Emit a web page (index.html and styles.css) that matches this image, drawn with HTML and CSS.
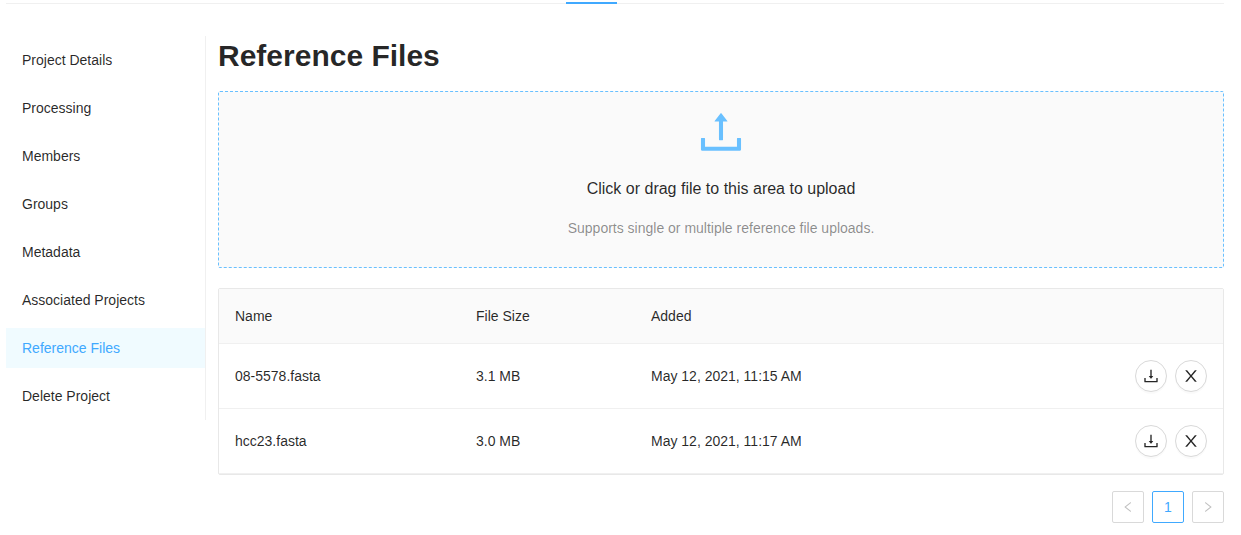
FILE: index.html
```html
<!DOCTYPE html>
<html lang="en">
<head>
<meta charset="utf-8">
<title>Reference Files</title>
<link rel="stylesheet" href="styles.css">
</head>
<body>
<svg class="icon-defs" aria-hidden="true">
  <symbol id="upload" viewBox="64 64 896 896"><path d="M400 317.7h73.9V656c0 4.4 3.6 8 8 8h60c4.4 0 8-3.6 8-8V317.7H624c6.7 0 10.4-7.7 6.3-12.9L518.3 163a8 8 0 00-12.6 0l-112 141.7c-4.1 5.3-.4 13 6.3 13zM878 626h-60c-4.4 0-8 3.6-8 8v154H214V634c0-4.4-3.6-8-8-8h-60c-4.4 0-8 3.6-8 8v198c0 17.7 14.3 32 32 32h684c17.7 0 32-14.3 32-32V634c0-4.4-3.6-8-8-8z"/></symbol>
  <symbol id="download" viewBox="64 64 896 896"><path d="M505.7 661a8 8 0 0012.6 0l112-141.7c4.1-5.2.4-12.9-6.3-12.9h-74.1V168c0-4.4-3.6-8-8-8h-60c-4.4 0-8 3.6-8 8v338.3H400c-6.7 0-10.4 7.7-6.3 12.9l112 141.8zM878 626h-60c-4.4 0-8 3.6-8 8v154H214V634c0-4.4-3.6-8-8-8h-60c-4.4 0-8 3.6-8 8v198c0 17.7 14.3 32 32 32h684c17.7 0 32-14.3 32-32V634c0-4.4-3.6-8-8-8z"/></symbol>
  <symbol id="close" viewBox="64 64 896 896"><path d="M563.8 512l262.5-312.9c4.4-5.2.7-13.1-6.1-13.1h-79.8c-4.7 0-9.2 2.1-12.3 5.7L511.6 449.8 295.1 191.7c-3-3.6-7.5-5.7-12.3-5.7H203c-6.8 0-10.5 7.9-6.1 13.1L459.4 512 196.9 824.9A7.95 7.95 0 00203 838h79.8c4.7 0 9.2-2.1 12.3-5.7l216.5-258.1 216.5 258.1c3 3.6 7.5 5.7 12.3 5.7h79.8c6.8 0 10.5-7.9 6.1-13.1L563.8 512z"/></symbol>
  <symbol id="left" viewBox="64 64 896 896"><path d="M724 218.3V141c0-6.7-7.7-10.4-12.9-6.3L260.3 486.8a31.86 31.86 0 000 50.3l450.8 352.1c5.3 4.1 12.9.4 12.9-6.3v-77.3c0-4.9-2.3-9.6-6.1-12.6l-360-281 360-281.1c3.8-3 6.1-7.7 6.1-12.6z"/></symbol>
  <symbol id="right" viewBox="64 64 896 896"><path d="M765.7 486.8L314.9 134.7A7.97 7.97 0 00302 141v77.3c0 4.9 2.3 9.6 6.1 12.6l360 281.1-360 281.1c-3.9 3-6.1 7.7-6.1 12.6V883c0 6.7 7.7 10.4 12.9 6.3l450.8-352.1a31.96 31.96 0 000-50.4z"/></symbol>
</svg>
<div class="page">
  <div class="tabs"><div class="tab-ink"></div></div>
  <div class="layout">
    <nav class="menu" aria-label="Project settings">
      <a class="menu-item" href="#details">Project Details</a>
      <a class="menu-item" href="#processing">Processing</a>
      <a class="menu-item" href="#members">Members</a>
      <a class="menu-item" href="#groups">Groups</a>
      <a class="menu-item" href="#metadata">Metadata</a>
      <a class="menu-item" href="#associated">Associated Projects</a>
      <a class="menu-item menu-item-selected" href="#references" aria-current="page">Reference Files</a>
      <a class="menu-item" href="#delete">Delete Project</a>
    </nav>
    <main class="content">
      <h1 class="title">Reference Files</h1>
      <button class="dragger" type="button">
        <svg class="dragger-icon" aria-hidden="true"><use href="#upload"/></svg>
        <span class="dragger-text">Click or drag file to this area to upload</span>
        <span class="dragger-hint">Supports single or multiple reference file uploads.</span>
      </button>
      <div class="table-box">
        <table class="table">
          <thead>
            <tr><th class="col-name">Name</th><th class="col-size">File Size</th><th>Added</th><th class="col-actions" aria-label="Actions"></th></tr>
          </thead>
          <tbody>
            <tr>
              <td>08-5578.fasta</td><td>3.1 MB</td><td>May 12, 2021, 11:15 AM</td>
              <td><div class="actions">
                <button class="round" type="button" aria-label="Download 08-5578.fasta"><svg class="icon"><use href="#download"/></svg></button>
                <button class="round" type="button" aria-label="Remove 08-5578.fasta"><svg class="icon"><use href="#close"/></svg></button>
              </div></td>
            </tr>
            <tr>
              <td>hcc23.fasta</td><td>3.0 MB</td><td>May 12, 2021, 11:17 AM</td>
              <td><div class="actions">
                <button class="round" type="button" aria-label="Download hcc23.fasta"><svg class="icon"><use href="#download"/></svg></button>
                <button class="round" type="button" aria-label="Remove hcc23.fasta"><svg class="icon"><use href="#close"/></svg></button>
              </div></td>
            </tr>
          </tbody>
        </table>
      </div>
      <nav class="pagination" aria-label="Pagination">
        <button class="page-button" type="button" disabled aria-label="Previous page"><svg class="icon-small"><use href="#left"/></svg></button>
        <button class="page-button page-button-active" type="button" aria-current="page">1</button>
        <button class="page-button" type="button" disabled aria-label="Next page"><svg class="icon-small"><use href="#right"/></svg></button>
      </nav>
    </main>
  </div>
</div>
</body>
</html>
```
FILE: styles.css
```css
* {
  box-sizing: border-box;
}

body {
  margin: 0;
  background: #fff;
  color: rgba(0, 0, 0, 0.85);
  font: 14px/22px "Liberation Sans", Arial, sans-serif;
}

button {
  font: inherit;
  color: inherit;
  cursor: pointer;
}

svg {
  display: block;
  fill: currentColor;
}

.icon-defs {
  display: none;
}

.page {
  padding: 2px 17px 12px 6px;
}

.tabs {
  height: 2px;
  padding-left: 560px;
  background: linear-gradient(#f0f0f0, #f0f0f0) bottom / 100% 1px no-repeat;
}

.tab-ink {
  width: 51px;
  height: 2px;
  background: #40a9ff;
}

.layout {
  display: flex;
  align-items: flex-start;
  gap: 12px;
  padding-top: 32px;
}

.menu {
  display: flex;
  flex: none;
  flex-direction: column;
  gap: 8px;
  width: 200px;
  padding: 4px 0;
  border-right: 1px solid #f0f0f0;
}

.menu-item {
  padding: 0 16px;
  color: inherit;
  line-height: 40px;
  text-decoration: none;
}

.menu-item-selected {
  background: #f0fbff;
  color: #40a9ff;
}

.content {
  flex: 1;
  min-width: 0;
}

.title {
  margin: 0 0 15px;
  font-size: 30px;
  font-weight: 600;
  line-height: 40px;
}

.dragger {
  display: flex;
  flex-direction: column;
  align-items: center;
  width: 100%;
  margin-bottom: 20px;
  padding: 16px 0 28px;
  border: 1px dashed #69c0ff;
  border-radius: 2px;
  background: #fafafa;
}

.dragger-icon {
  width: 48px;
  height: 48px;
  margin-bottom: 21px;
  color: #69c0ff;
}

.dragger-text {
  margin-bottom: 16px;
  font-size: 16px;
  line-height: 24px;
}

.dragger-hint {
  color: rgba(0, 0, 0, 0.45);
}

.table-box {
  margin-bottom: 16px;
  border: 1px solid #e8e8e8;
  border-radius: 2px;
}

.table {
  width: 100%;
  border-collapse: separate;
  border-spacing: 0;
  table-layout: fixed;
}

.table th,
.table td {
  padding: 16px;
  border-bottom: 1px solid #f0f0f0;
  font-weight: 400;
  text-align: left;
}

.table th {
  background: #fafafa;
}

.col-name {
  width: 241px;
}

.col-size {
  width: 175px;
}

.col-actions {
  width: 120px;
}

.actions {
  display: flex;
  justify-content: flex-end;
  gap: 8px;
}

.round {
  display: grid;
  place-items: center;
  width: 32px;
  height: 32px;
  padding: 0;
  border: 1px solid #d9d9d9;
  border-radius: 50%;
  background: #fff;
  box-shadow: 0 2px 0 rgba(0, 0, 0, 0.02);
}

.icon {
  width: 16px;
  height: 16px;
}

.pagination {
  display: flex;
  justify-content: flex-end;
  gap: 8px;
}

.page-button {
  display: grid;
  place-items: center;
  width: 32px;
  height: 32px;
  padding: 0;
  border: 1px solid #d9d9d9;
  border-radius: 2px;
  background: #fff;
}

.page-button:disabled {
  color: rgba(0, 0, 0, 0.25);
  cursor: not-allowed;
}

.page-button-active {
  border-color: #40a9ff;
  color: #40a9ff;
}

.icon-small {
  width: 12px;
  height: 12px;
}
```
